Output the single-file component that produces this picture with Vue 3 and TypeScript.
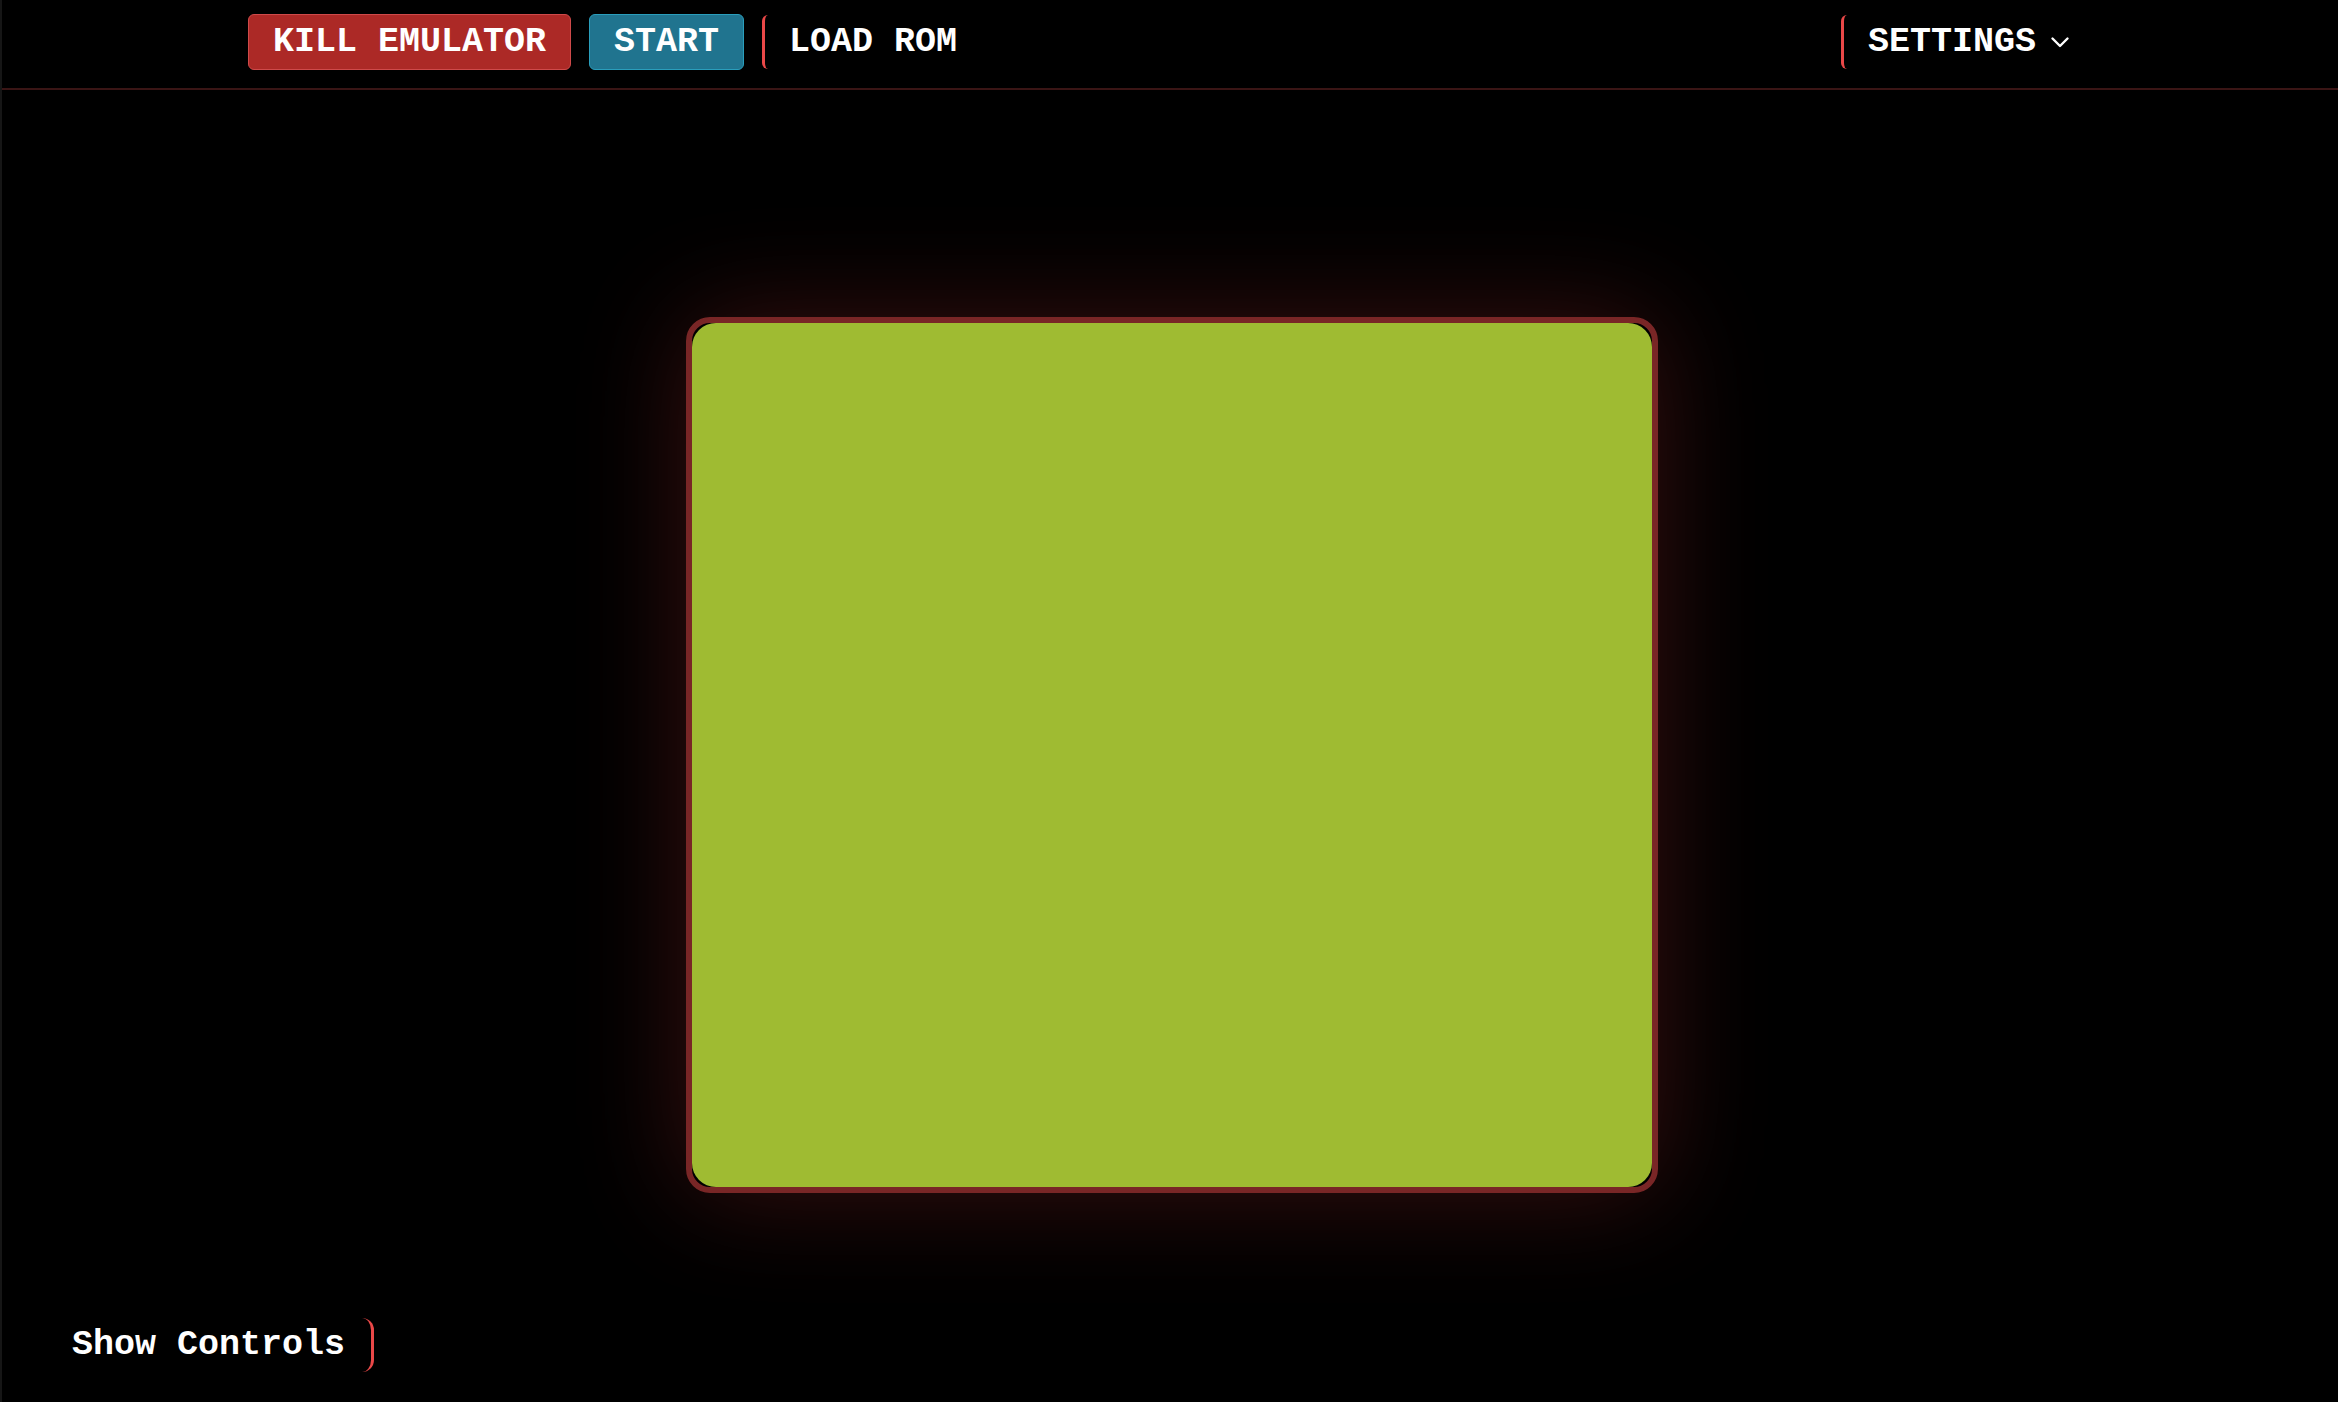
<script setup lang="ts">
import { ref } from 'vue'

const running = ref<boolean>(false)
const settingsOpen = ref<boolean>(false)
const controlsOpen = ref<boolean>(false)
</script>

<template>
  <div class="app">
    <header class="topbar">
      <nav class="toolbar">
        <button class="btn btn-kill" type="button" @click="running = false">KILL EMULATOR</button>
        <button class="btn btn-start" type="button" @click="running = true">START</button>
        <button class="item" type="button">LOAD ROM</button>
        <button
          class="item item-settings"
          type="button"
          :aria-expanded="settingsOpen"
          @click="settingsOpen = !settingsOpen"
        >
          SETTINGS
          <svg class="chevron" viewBox="0 0 24 24" aria-hidden="true">
            <path d="M4.5 8.5 L12 16 L19.5 8.5" />
          </svg>
        </button>
      </nav>
    </header>

    <main class="stage">
      <div class="bezel">
        <canvas class="lcd" width="160" height="144"></canvas>
      </div>
    </main>

    <footer class="bottom">
      <button
        class="controls"
        type="button"
        :aria-expanded="controlsOpen"
        @click="controlsOpen = !controlsOpen"
      >
        Show Controls
      </button>
    </footer>
  </div>
</template>

<style>
body {
  background: #000;
}
</style>

<style scoped>
.app {
  box-sizing: border-box;
  display: flex;
  flex-direction: column;
  min-height: 100vh;
  border-left: 2px solid #161616;
  background: #000;
  color: #fff;
  font-family: "Liberation Mono", monospace;
}

.topbar {
  padding: 14px 24px 18px;
  border-bottom: 2px solid #3a1515;
}

.toolbar {
  display: flex;
  align-items: center;
  gap: 18px;
  max-width: 1844px;
  margin: 0 auto;
}

button {
  box-sizing: border-box;
  margin: 0;
  background: transparent;
  color: #fff;
  font-family: inherit;
  font-size: 35px;
  font-weight: 700;
  line-height: 36px;
  white-space: nowrap;
  cursor: pointer;
}

.btn {
  padding: 9px 24px;
  border: 1px solid;
  border-radius: 6px;
}

.btn-kill {
  background: #ac2926;
  border-color: #cf4a4a;
}

.btn-start {
  background: #20748f;
  border-color: #2a9ebc;
}

.item {
  display: flex;
  align-items: center;
  gap: 12px;
  padding: 9px 20px 9px 24px;
  border: 0 solid #ea4848;
  border-left-width: 3px;
  border-radius: 6px;
}

.item-settings {
  margin-left: auto;
}

.chevron {
  width: 24px;
  height: 24px;
  fill: none;
  stroke: #fff;
  stroke-width: 2.4;
  stroke-linecap: round;
  stroke-linejoin: round;
}

.stage {
  display: flex;
  flex: 1;
  align-items: center;
  justify-content: center;
  padding: 102px 0 0 4px;
}

.bezel {
  border: 6px solid #792626;
  border-radius: 24px;
  box-shadow: 0 0 110px rgba(239, 68, 68, 0.24);
}

.lcd {
  display: block;
  width: 960px;
  max-width: 100%;
  border-radius: 24px;
  background: #9fbb32;
}

.bottom {
  padding: 0 46px 30px;
}

.controls {
  padding: 9px 26px 9px 24px;
  border: 0 solid #ea4848;
  border-right-width: 3px;
  border-radius: 12px;
}
</style>
